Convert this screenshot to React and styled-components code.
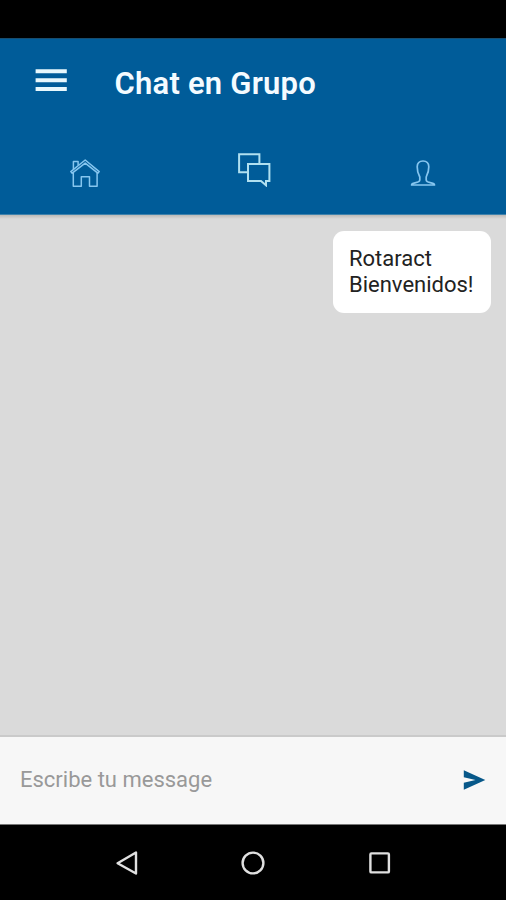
import React from "react";
import styled, { createGlobalStyle } from "styled-components";

const GlobalStyle = createGlobalStyle`
  * { box-sizing: border-box; }
  body { margin: 0; background: #000; font-family: Roboto, "Noto Sans", sans-serif; }
`;

const Screen = styled.div`
  display: flex;
  flex-direction: column;
  width: 506px;
  height: 900px;
  overflow: hidden;
  background: #000;
`;

const StatusBar = styled.div`
  flex: 0 0 38px;
  background: #000;
`;

const Header = styled.header`
  flex: 0 0 177px;
  display: flex;
  flex-direction: column;
  background: #005c99;
  border-top: 1px solid #174d70;
  border-bottom: 1px solid #3f82ac;
`;

const TitleBar = styled.div`
  flex: 0 0 89px;
  display: flex;
  align-items: flex-start;
  padding-left: 35px;
`;

const MenuButton = styled.button`
  width: 33px;
  height: 24px;
  margin: 29px 46.5px 0 0;
  padding: 0;
  border: 0;
  background: none;
  svg { display: block; }
`;

const Title = styled.h1`
  margin: 27px 0 0;
  font-size: 31px;
  line-height: 36px;
  font-weight: 600;
  letter-spacing: 0.22px;
  color: #f4fbff;
  white-space: nowrap;
`;

const Tabs = styled.nav`
  flex: 1;
  display: grid;
  grid-template-columns: repeat(3, 1fr);
`;

const Tab = styled.button`
  display: flex;
  justify-content: center;
  align-items: flex-start;
  padding: ${({ $top }) => $top}px 0 0 ${({ $left }) => $left}px;
  border: 0;
  background: none;
  color: ${({ $active }) => ($active ? "#b0e0f0" : "#86c6ef")};
`;

const Messages = styled.main`
  flex: 1;
  display: flex;
  flex-direction: column;
  align-items: flex-end;
  padding: 16px 15px;
  background: linear-gradient(#bcbab7, #dadada 4px);
`;

const Bubble = styled.article`
  width: 158px;
  height: 82px;
  padding: 15px 0 0 16px;
  border-radius: 11px;
  background: #fff;
  color: #222;
  font-size: 22px;
  line-height: 25.5px;
  white-space: nowrap;
`;

const Line = styled.div``;

const Composer = styled.form`
  flex: 0 0 90px;
  display: flex;
  align-items: center;
  justify-content: space-between;
  padding: 0 20px 1px;
  background: #f7f7f7;
  border-top: 2px solid #cacaca;
  border-bottom: 1px solid #777;
`;

const Placeholder = styled.span`
  font-size: 22px;
  line-height: 26px;
  color: #999;
  white-space: nowrap;
`;

const SendButton = styled.button`
  width: 23px;
  height: 22px;
  padding: 0;
  border: 0;
  background: none;
  svg { display: block; }
`;

const NavBar = styled.footer`
  flex: 0 0 75px;
  display: flex;
  justify-content: space-between;
  align-items: center;
  padding: 0 114px;
  background: #000;
`;

const MenuIcon = () => (
  <svg width="33" height="24" viewBox="0 0 33 24">
    <path d="M.6 3.3h31.2M.6 12.3h31.2M.6 20.9h31.2" stroke="#e8f8fd" strokeWidth="4" />
  </svg>
);

const HomeIcon = () => (
  <svg width="32" height="32" viewBox="0 0 32 32" fill="none" stroke="currentColor" strokeWidth="1.5" strokeLinejoin="round">
    <path d="M1.8 14.6 16.2 3 30.2 14.6 28.8 16.2 16.2 6.1 3.2 16.2Z" />
    <path d="M4.3 15.5V29.2H12.3V19.8H20.5V29.2H28.1V15.5" />
    <path d="M4.4 12.3V4.4H9.1V8.3" />
  </svg>
);

const ChatIcon = () => (
  <svg width="34" height="35" viewBox="0 0 34 35" fill="none" stroke="currentColor" strokeWidth="2">
    <path d="M11 20.3H2.1V2.2H22.4V11" />
    <path d="M11 12H32.4V29H29V33.3L24 29H11Z" />
  </svg>
);

const PersonIcon = () => (
  <svg width="28" height="30" viewBox="0 0 28 30" fill="none" stroke="currentColor" strokeWidth="1.7" strokeLinejoin="round">
    <path d="M10.8 19C8.8 15 8.1 11.6 8.2 8.7C8.3 5 10.5 3 14 3S19.7 5 19.8 8.7C19.9 11.6 19 15.2 17.2 19V22C17.2 23.5 19 24.3 22.1 24.8C24.8 25.2 25.5 25.8 25.5 27H2.6C2.6 25.8 3.3 25.2 6 24.8C9.1 24.3 10.8 23.5 10.8 22Z" />
  </svg>
);

const SendIcon = () => (
  <svg width="23" height="22" viewBox="0 0 23 22">
    <path d="M.8 1.2 22.3 11 .8 20.8V13.8L12.5 11 .8 8.2Z" fill="#075889" />
  </svg>
);

const BackIcon = () => (
  <svg width="25" height="26" viewBox="0 0 25 26">
    <path d="M22 2.5V23.5L3.6 13.2Z" fill="none" stroke="#e0e0e0" strokeWidth="2.4" strokeLinejoin="round" />
  </svg>
);

const CircleIcon = () => (
  <svg width="26" height="26" viewBox="0 0 26 26">
    <circle cx="13" cy="13" r="10.4" fill="none" stroke="#e0e0e0" strokeWidth="2.4" />
  </svg>
);

const SquareIcon = () => (
  <svg width="25" height="26" viewBox="0 0 25 26">
    <rect x="3.4" y="3.4" width="18.5" height="19" rx="1" fill="none" stroke="#e0e0e0" strokeWidth="2.4" />
  </svg>
);

export default function App() {
  return (
    <>
      <GlobalStyle />
      <Screen>
        <StatusBar />
        <Header>
          <TitleBar>
            <MenuButton aria-label="Menú"><MenuIcon /></MenuButton>
            <Title>Chat en Grupo</Title>
          </TitleBar>
          <Tabs>
            <Tab $top={29} $left={1} aria-label="Inicio"><HomeIcon /></Tab>
            <Tab $top={24} $left={2} $active aria-label="Chat"><ChatIcon /></Tab>
            <Tab $top={30} $left={2} aria-label="Perfil"><PersonIcon /></Tab>
          </Tabs>
        </Header>
        <Messages>
          <Bubble>
            <Line>Rotaract</Line>
            <Line>Bienvenidos!</Line>
          </Bubble>
        </Messages>
        <Composer>
          <Placeholder>Escribe tu message</Placeholder>
          <SendButton type="button" aria-label="Enviar"><SendIcon /></SendButton>
        </Composer>
        <NavBar>
          <BackIcon />
          <CircleIcon />
          <SquareIcon />
        </NavBar>
      </Screen>
    </>
  );
}
